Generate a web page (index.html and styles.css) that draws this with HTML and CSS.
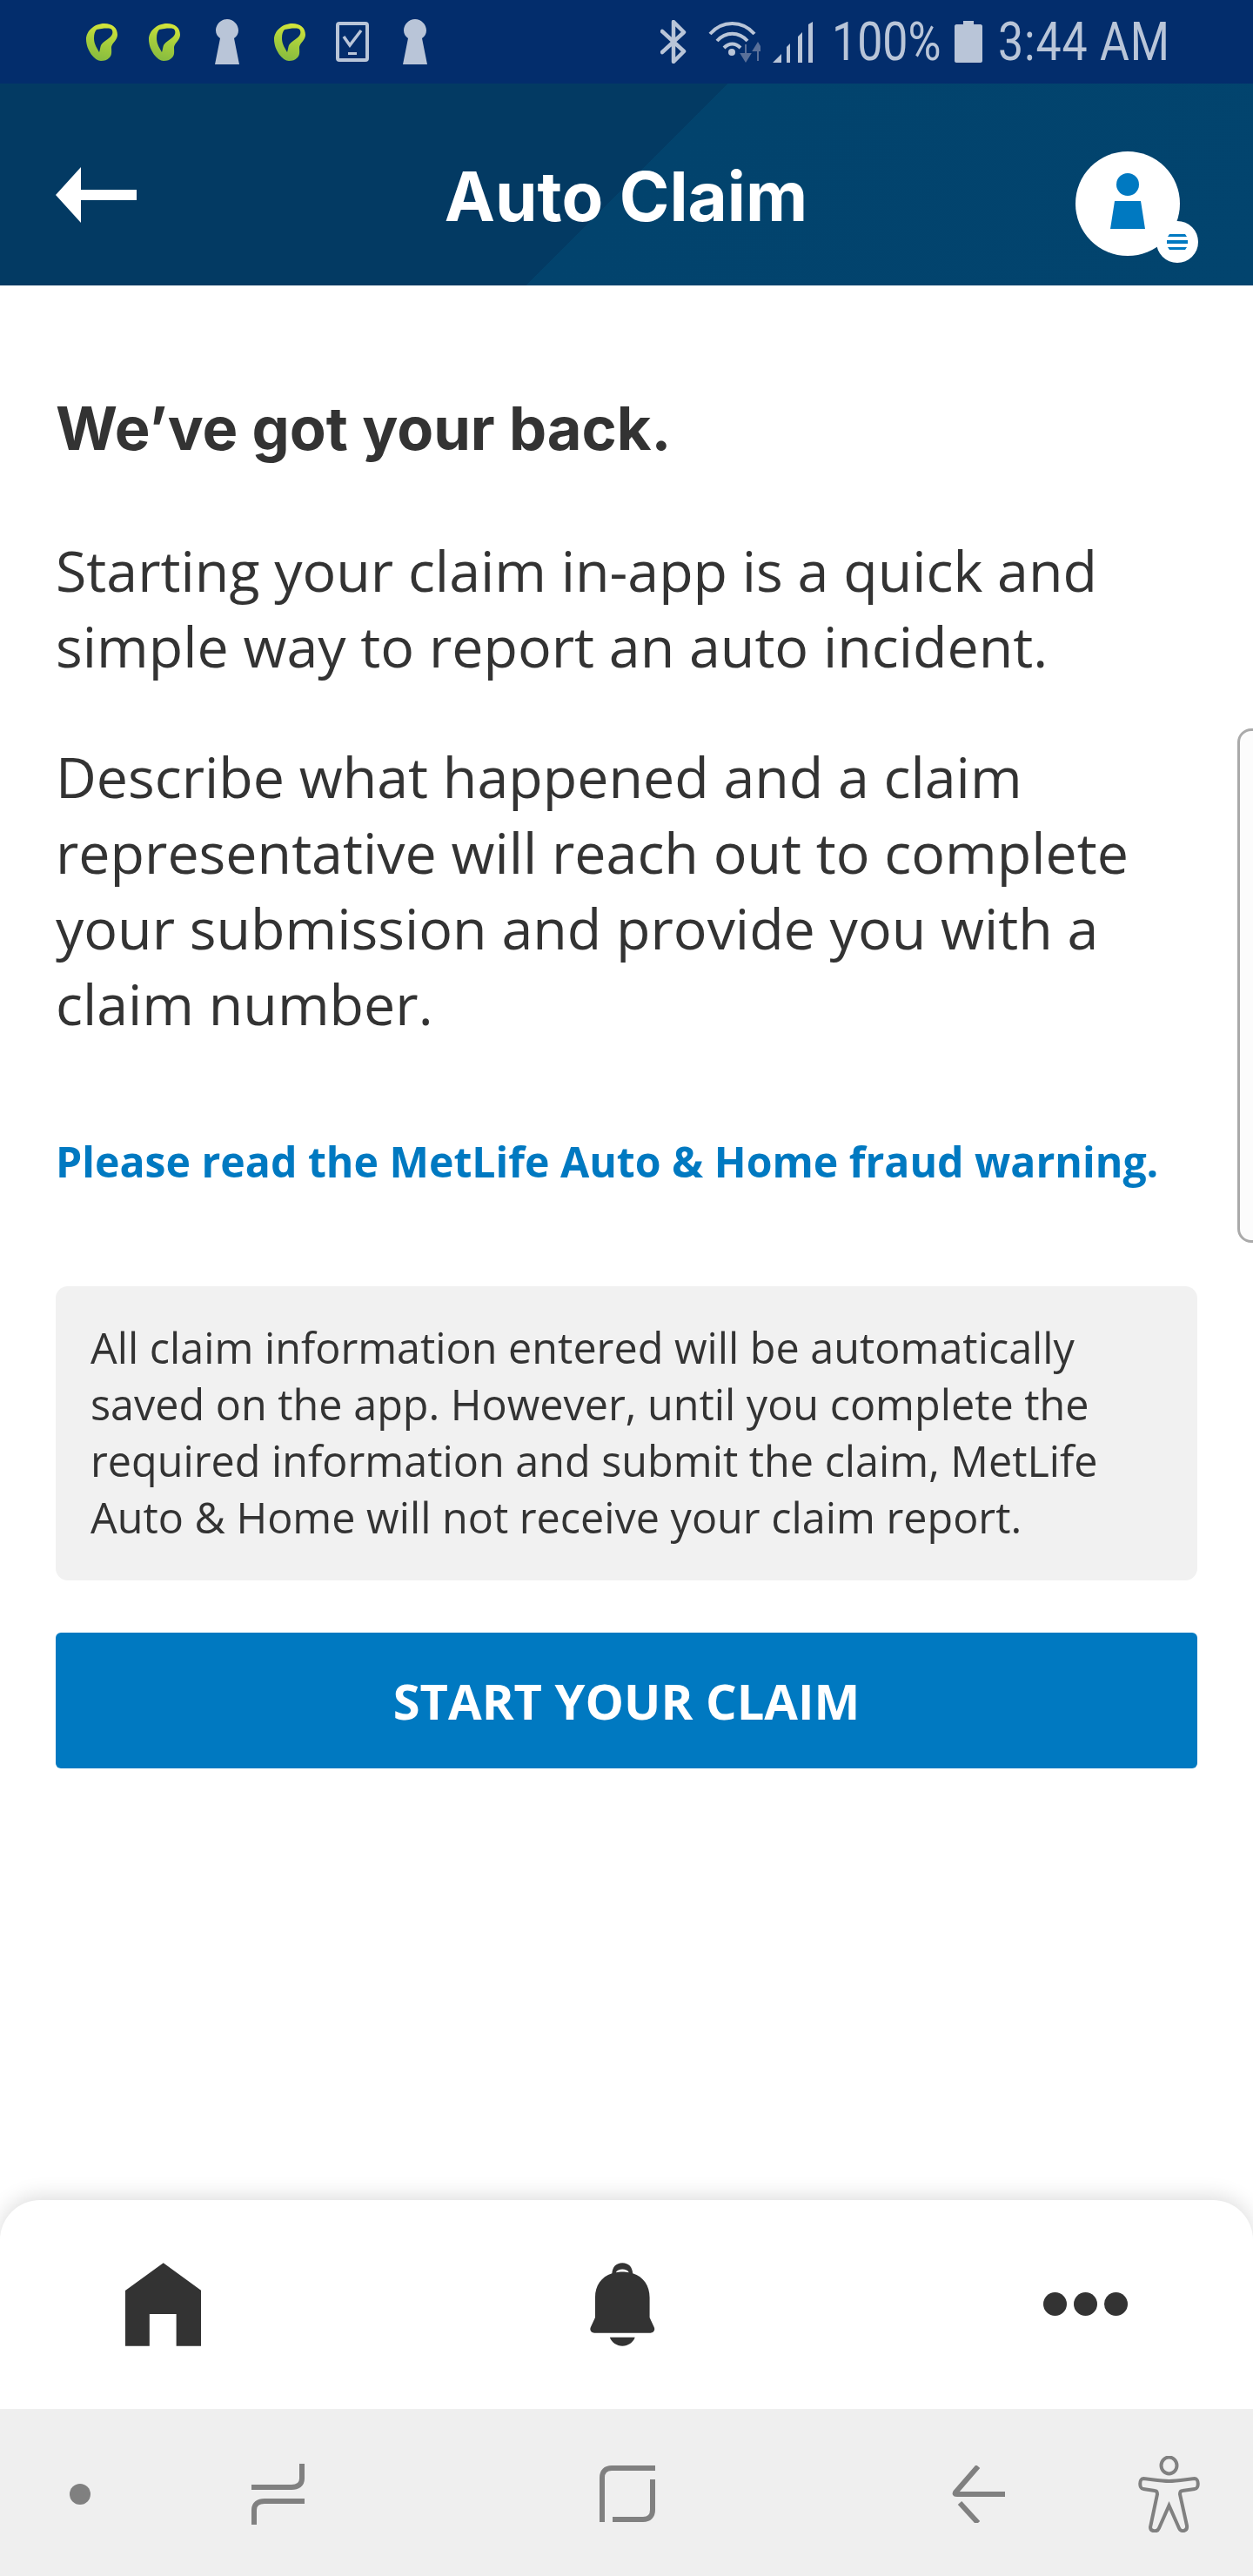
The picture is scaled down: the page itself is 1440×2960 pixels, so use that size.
FILE: index.html
```html
<!DOCTYPE html>
<html lang="en">
<head>
    <meta charset="UTF-8">
    <meta name="viewport" content="width=device-width, initial-scale=1.0">
    <title>Auto Claim</title>
    <link rel="stylesheet" href="styles.css">
</head>
<body>
<div class="app">
    <svg class="defs" width="0" height="0">
        <defs>
            <linearGradient id="leafFill" x1="0.6" y1="0" x2="0.4" y2="1">
                <stop offset="0" stop-color="#d6e63a"/>
                <stop offset="0.45" stop-color="#a9d03c"/>
                <stop offset="1" stop-color="#86bb3f"/>
            </linearGradient>
            <symbol id="leaf" viewBox="0 0 36 43">
                <path fill="url(#leafFill)" d="M21 0C30 0 36 5 36 13C36 19 30 22 29 27C29 32 30 36 27 39C24 42 21 43 17 43C10 43 0 31 0 18C0 9 9 0 21 0Z"/>
                <path fill="#032d6c" d="M12 7C17 6 24 5 28 6C31 7 31 12 29 14C26 18 20 20 17 25C16 28 16 30 15 33C13 29 9 24 9 17C9 12 10 9 12 7Z"/>
            </symbol>
            <symbol id="keyhole" viewBox="0 0 28 52">
                <path fill="#b9c5d8" d="M14 0C21 0 27 6 27 13C27 17 25 20 22 22L28 52L0 52L6 22C3 20 1 17 1 13C1 6 7 0 14 0Z"/>
            </symbol>
        </defs>
    </svg>

    <div class="status-bar">
        <div class="status-left">
            <svg class="ic-leaf"><use href="#leaf"/></svg>
            <svg class="ic-leaf"><use href="#leaf"/></svg>
            <svg class="ic-key"><use href="#keyhole"/></svg>
            <svg class="ic-leaf"><use href="#leaf"/></svg>
            <svg class="ic-phone" viewBox="0 0 38 46">
                <rect x="2" y="2" width="34" height="42" rx="2" fill="none" stroke="#b9c5d8" stroke-width="4"/>
                <path d="M9 17L16 27L29 10" fill="none" stroke="#b9c5d8" stroke-width="3.5"/>
                <rect x="14" y="35" width="10" height="3" fill="#b9c5d8"/>
            </svg>
            <svg class="ic-key"><use href="#keyhole"/></svg>
        </div>
        <div class="status-right">
            <svg class="ic-bt" viewBox="0 0 31 50">
                <path d="M2 13L27 36L15 48V2L27 14L2 37" fill="none" stroke="#b9c5d8" stroke-width="4.5" stroke-linejoin="round" stroke-linecap="round"/>
            </svg>
            <svg class="ic-wifi" viewBox="0 0 60 48">
                <g fill="none" stroke="#b9c5d8" stroke-width="4">
                    <path d="M2 15C16 -1 39 -1 53 15"/>
                    <path d="M10 23C20 12 35 12 45 23"/>
                    <path d="M18 31C24 25 31 25 37 31"/>
                </g>
                <circle cx="27" cy="36" r="4" fill="#b9c5d8"/>
                <path d="M43 27V42M38 38L43 46L48 38Z" fill="#5a7099" stroke="#5a7099" stroke-width="2"/>
                <path d="M57 46V31M52 34L57 26L62 34Z" fill="#5a7099" stroke="#5a7099" stroke-width="2"/>
            </svg>
            <svg class="ic-signal" viewBox="0 0 46 47">
                <path fill="#b9c5d8" d="M0 47L10 37V47ZM16 29L20 25V47H16ZM29 17L34 12V47H29ZM41 3L46 0V47H41Z"/>
            </svg>
            <span class="status-text pct">100%</span>
            <svg class="ic-batt" viewBox="0 0 32 48">
                <path fill="#b9c5d8" d="M10 0H22V4H30C31 4 32 5 32 6V46C32 47 31 48 30 48H2C1 48 0 47 0 46V6C0 5 1 4 2 4H10Z"/>
            </svg>
            <span class="status-text clock">3:44 AM</span>
        </div>
    </div>

    <header class="app-header">
        <svg class="back-arrow" viewBox="0 0 93 64">
            <path fill="#fff" d="M0 32L29 0V26H93V38H29V64Z"/>
        </svg>
        <h1 class="page-title">Auto Claim</h1>
        <div class="avatar">
            <svg viewBox="0 0 120 120" width="120" height="120">
                <circle cx="60" cy="60" r="60" fill="#fff"/>
                <circle cx="60" cy="38" r="13" fill="#0079c1"/>
                <path fill="#0079c1" d="M45 57H75L80 89H40Z"/>
            </svg>
            <svg class="avatar-badge" viewBox="0 0 48 48" width="48" height="48">
                <circle cx="24" cy="24" r="24" fill="#fff"/>
                <path fill="#0079c1" d="M15 15H33L35 18H13ZM12 22H36V26H12ZM13 30H35L33 33H15Z"/>
            </svg>
        </div>
    </header>

    <main class="content">
        <h2 class="headline">We’ve got your back.</h2>
        <p class="lead">Starting your claim in-app is a quick and simple way to report an auto incident.</p>
        <p class="lead">Describe what happened and a claim representative will reach out to complete your submission and provide you with a claim number.</p>
        <a class="fraud-link">Please read the MetLife Auto &amp; Home fraud warning.</a>
        <div class="notice">All claim information entered will be automatically saved on the app. However, until you complete the required information and submit the claim, MetLife Auto &amp; Home will not receive your claim report.</div>
        <button class="start-btn">START YOUR CLAIM</button>
        <div class="edge-handle"></div>
    </main>

    <nav class="tab-bar">
        <svg class="ic-home" viewBox="0 0 88 96">
            <path fill="#333" d="M44 0L88 32V96H59V59H28V96H0V32Z"/>
        </svg>
        <svg class="ic-bell" viewBox="0 0 75 96">
            <path fill="#333" fill-rule="evenodd" d="M37.5 0C30 0 26 5 25.5 12C13 16 6 26 6 40V63L1 74C-1 78 2 81 5 81H70C73 81 76 78 74 74L69 63V40C69 26 62 16 49.5 12C49 5 45 0 37.5 0ZM30 11C32 6 43 6 45 11C41 10 34 10 30 11Z"/>
            <path fill="#333" d="M23 86H52C50 92 44 96 37.5 96C31 96 25 92 23 86Z"/>
        </svg>
        <div class="more-dots"><span></span><span></span><span></span></div>
    </nav>

    <div class="system-nav">
        <span class="sys-dot"></span>
        <svg class="ic-recents" viewBox="0 0 61 70">
            <path d="M0 27H46C53 27 58 24 58 17V0M61 43H15C8 43 3 46 3 53V70" fill="none" stroke="#808080" stroke-width="6"/>
        </svg>
        <svg class="ic-square" viewBox="0 0 64 65">
            <path d="M64 3H14C7 3 3 7 3 14V65M15 62H50C57 62 61 58 61 51V16" fill="none" stroke="#808080" stroke-width="6"/>
        </svg>
        <svg class="ic-sysback" viewBox="0 0 61 66">
            <path d="M30 1L4 31C3 33 4 33 6 33H61M9 43L30 66" fill="none" stroke="#808080" stroke-width="6"/>
        </svg>
        <svg class="ic-access" viewBox="0 0 73 88">
            <ellipse cx="36.5" cy="11" rx="9" ry="9.5" fill="none" stroke="#808080" stroke-width="4"/>
            <path d="M7 26C17 27 27 29 36.5 29C46 29 56 27 66 26C71 26 71 38 66 38L52 40C50 40 49 41 49 44L57 80C58 87 50 88 48 83L36.5 57L25 83C23 88 15 87 15 82L23 44C23 41 22 40 20 40L7 38C2 38 2 26 7 26Z" fill="none" stroke="#808080" stroke-width="4"/>
        </svg>
    </div>
</div>
</body>
</html>
```
FILE: styles.css
```css
* { box-sizing: border-box; }
body { margin: 0; background: #fff; font-family: "Open Sans", "Noto Sans", sans-serif; color: #333; }
.app { width: 1440px; height: 2960px; display: flex; flex-direction: column; overflow: hidden; }
.defs { display: block; height: 0; }

/* status bar */
.status-bar { height: 96px; flex: none; background: #032d6c; display: flex; align-items: center; justify-content: space-between; padding: 0 100px 0 99px; }
.status-left { display: flex; align-items: center; }
.status-left svg { display: block; }
.ic-leaf { width: 36px; height: 43px; margin-right: 36px; }
.ic-key { width: 28px; height: 52px; margin: 0 40px 0 4px; }
.ic-phone { width: 38px; height: 46px; margin: 0 35px 0 -1px; }
.status-right { display: flex; align-items: center; }
.status-right svg { display: block; flex: none; }
.ic-bt { width: 31px; height: 50px; margin-right: 24px; }
.ic-wifi { width: 60px; height: 48px; margin-right: 14px; }
.ic-signal { width: 46px; height: 47px; margin-right: 22px; }
.ic-batt { width: 32px; height: 48px; margin-right: 18px; }
.status-text { display: inline-block; font-family: Roboto, sans-serif; font-weight: 400; font-size: 61px; line-height: 60px; color: #b9c5d8; transform-origin: left center; transform: scaleX(.85); white-space: nowrap; }
.pct { width: 123px; margin-right: 18px; }
.clock { width: 193px; letter-spacing: 1px; }

/* header */
.app-header { height: 232px; flex: none; display: flex; align-items: flex-start; padding: 0 84px 0 64px; background: linear-gradient(135deg, #033a63 0, #033a63 50%, #02436d 50%, #02446e 100%); }
.back-arrow { width: 93px; height: 64px; display: block; flex: none; margin-top: 96px; }
.page-title { flex: 1; margin: 84px 0 0 46px; font-family: Inter, sans-serif; font-weight: 700; font-size: 78px; line-height: 92px; color: #fff; text-align: center; white-space: nowrap; }
.avatar { position: relative; flex: none; width: 120px; height: 120px; margin-top: 78px; }
.avatar svg { display: block; }
.avatar-badge { position: absolute; left: 93px; top: 80px; }

/* main content */
.content { flex: 1; position: relative; padding: 0 64px; }
.headline { margin: 117px 0 0; font-family: Inter, sans-serif; font-weight: 700; font-size: 68.5px; line-height: 96px; color: #333; }
.lead { margin: 0; font-size: 64.5px; line-height: 87px; color: #333; }
.headline + .lead { margin-top: 71px; }
.lead + .lead { margin-top: 63px; }
.fraud-link { display: block; margin-top: 102px; font-size: 48.2px; line-height: 70px; font-weight: 700; color: #0079c1; white-space: nowrap; }
.notice { margin-top: 109px; height: 338px; padding: 38px 40px; background: #f1f1f1; border-radius: 14px; font-size: 48.5px; line-height: 65px; color: #333; }
.start-btn { display: block; width: 100%; height: 156px; margin-top: 60px; border: none; border-radius: 6px; background: #0079c1; color: #fff; font-family: "Open Sans", sans-serif; font-size: 56px; font-weight: 700; }
.edge-handle { position: absolute; right: -18px; top: 509px; width: 36px; height: 591px; background: #fcfcfc; border: 3px solid #aaa; border-radius: 16px; }

/* bottom tab bar */
.tab-bar { height: 240px; flex: none; position: relative; display: flex; align-items: flex-start; background: #fff; border-radius: 46px 46px 0 0; box-shadow: 0 -4px 24px rgba(0, 0, 0, .14); padding: 72px 144px 0; }
.ic-home { width: 88px; height: 96px; display: block; }
.ic-bell { width: 75px; height: 96px; display: block; margin-left: 447px; }
.more-dots { display: flex; gap: 8px; margin-left: 446px; margin-top: 34px; }
.more-dots span { width: 27px; height: 27px; border-radius: 50%; background: #333; }

/* android nav */
.system-nav { height: 192px; flex: none; position: relative; display: flex; align-items: flex-start; background: #efefef; }
.system-nav svg { display: block; flex: none; }
.sys-dot { width: 24px; height: 24px; margin: 86px 0 0 80px; border-radius: 50%; background: #808080; }
.ic-recents { width: 61px; height: 70px; margin: 63px 0 0 185px; }
.ic-square { width: 64px; height: 65px; margin: 65px 0 0 339px; }
.ic-sysback { width: 61px; height: 66px; margin: 65px 0 0 341px; }
.ic-access { width: 73px; height: 88px; margin: 54px 0 0 152px; }
```
